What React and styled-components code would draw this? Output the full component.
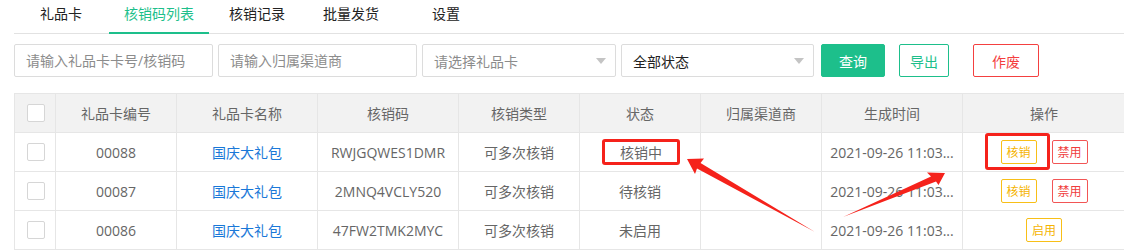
import React from "react";
import styled, { createGlobalStyle } from "styled-components";

const GlobalStyle = createGlobalStyle`
  html, body {
    margin: 0;
    padding: 0;
    overflow: hidden;
    background: #fff;
  }
  body {
    font-family: "Open Sans", "Noto Sans CJK SC", sans-serif;
    font-size: 14px;
    color: #333;
  }
  * {
    box-sizing: border-box;
  }
`;

const green = "#1dbf8b";
const red = "#f44040";
const yellow = "#f8bf17";

const Page = styled.div`
  position: relative;
  width: 1124px;
  height: 252px;
  overflow: hidden;
  padding-left: 14px;
`;

const TabBar = styled.div`
  display: flex;
  height: 34px;
  border-bottom: 1px solid #e2e2e2;
  padding-left: 11px;
`;

const Tab = styled.div`
  height: 34px;
  padding: 0 15px;
  margin-left: ${(p) => p.$offset || 0}px;
  line-height: 28px;
  color: ${(p) => (p.$active ? green : "#222")};
  border-bottom: 2px solid ${(p) => (p.$active ? green : "transparent")};
  margin-bottom: -1px;
  white-space: nowrap;
`;

const Filters = styled.div`
  display: flex;
  align-items: center;
  margin-top: 10px;
  height: 33px;
`;

const Field = styled.input`
  width: ${(p) => p.$w}px;
  height: 33px;
  margin-right: 5px;
  border: 1px solid #dcdcdc;
  border-radius: 2px;
  padding: 0 11px;
  font-family: inherit;
  font-size: 14px;
  color: #333;
  outline: none;
  &::placeholder {
    color: #8c8c8c;
  }
`;

const Select = styled.div`
  width: ${(p) => p.$w}px;
  height: 33px;
  margin-right: ${(p) => p.$mr}px;
  border: 1px solid #dcdcdc;
  border-radius: 2px;
  padding: 0 11px;
  display: flex;
  align-items: center;
  color: ${(p) => (p.$placeholder ? "#8c8c8c" : "#222")};
`;

const Caret = styled.span`
  margin-left: auto;
  margin-right: -2px;
  width: 0;
  height: 0;
  border-left: 5px solid transparent;
  border-right: 5px solid transparent;
  border-top: 6px solid #c4c4c4;
`;

const Button = styled.button`
  height: 33px;
  width: ${(p) => p.$w}px;
  margin-right: ${(p) => p.$mr || 0}px;
  border-radius: 2px;
  font-family: inherit;
  font-size: 14px;
  padding: 0;
  cursor: pointer;
  border: 1px solid ${(p) => p.$color};
  background: ${(p) => (p.$solid ? p.$color : "#fff")};
  color: ${(p) => (p.$solid ? "#fff" : p.$color)};
`;

const cols = "41px 121px 141px 141px 121px 121px 121px 141px 163px";

const Table = styled.div`
  margin-top: 16px;
  width: 1112px;
  border-left: 1px solid #e6e6e6;
  border-top: 1px solid #e6e6e6;
`;

const Row = styled.div`
  display: grid;
  grid-template-columns: ${cols};
  height: 39px;
  background: ${(p) => (p.$head ? "#f2f2f2" : "#fff")};
`;

const Cell = styled.div`
  position: relative;
  display: flex;
  align-items: center;
  justify-content: center;
  gap: 15px;
  border-right: 1px solid #e6e6e6;
  border-bottom: 1px solid #e6e6e6;
  color: ${(p) => p.$color || "#666"};
  white-space: nowrap;
`;

const Check = styled.span`
  width: 18px;
  height: 18px;
  margin-left: 1px;
  border: 1px solid #d6d6d6;
  border-radius: 2px;
  background: #fff;
`;

const Marked = styled.span`
  display: inline-flex;
  align-items: center;
  justify-content: center;
  width: 78px;
  height: 26px;
  margin-left: 2px;
  border: 3px solid #f5221b;
  border-radius: 3px;
`;

const Action = styled.span`
  position: relative;
  display: inline-flex;
  align-items: center;
  justify-content: center;
  width: 36px;
  height: 24px;
  border: 1px solid ${(p) => p.$color};
  border-radius: 2px;
  color: ${(p) => p.$text || p.$color};
  font-size: 12px;
`;

const Highlight = styled.span`
  position: absolute;
  left: -17px;
  top: -8px;
  width: 65px;
  height: 37px;
  border: 3px solid #f5221b;
  border-radius: 3px;
`;

const Arrows = styled.svg`
  position: absolute;
  left: 0;
  top: 0;
  pointer-events: none;
`;

const head = ["", "礼品卡编号", "礼品卡名称", "核销码", "核销类型", "状态", "归属渠道商", "生成时间", "操作"];

const rows = [
  { no: "00088", code: "RWJGQWES1DMR", status: "核销中", mark: true, actions: ["use", "ban"] },
  { no: "00087", code: "2MNQ4VCLY520", status: "待核销", actions: ["use", "ban"] },
  { no: "00086", code: "47FW2TMK2MYC", status: "未启用", actions: ["enable"] },
];

const tabs = [
  { label: "礼品卡" },
  { label: "核销码列表", active: true, offset: 12 },
  { label: "核销记录", offset: 5 },
  { label: "批量发货", offset: 8 },
  { label: "设置", offset: 23 },
];

const actionStyle = {
  use: { label: "核销", color: yellow, text: "#f5b400" },
  ban: { label: "禁用", color: "#f25555", text: "#f03c3c" },
  enable: { label: "启用", color: yellow, text: "#f5b400" },
};

export default function App() {
  return (
    <>
      <GlobalStyle />
      <Page>
        <TabBar>
          {tabs.map((t) => (
            <Tab key={t.label} $active={t.active} $offset={t.offset}>
              {t.label}
            </Tab>
          ))}
        </TabBar>

        <Filters>
          <Field $w={199} placeholder="请输入礼品卡卡号/核销码" />
          <Field $w={199} placeholder="请输入归属渠道商" />
          <Select $w={194} $mr={5} $placeholder>
            请选择礼品卡
            <Caret />
          </Select>
          <Select $w={193} $mr={7}>
            全部状态
            <Caret />
          </Select>
          <Button $w={64} $mr={14} $color={green} $solid>
            查询
          </Button>
          <Button $w={50} $mr={24} $color={green}>
            导出
          </Button>
          <Button $w={66} $color={red}>
            作废
          </Button>
        </Filters>

        <Table>
          <Row $head>
            {head.map((h, i) => (
              <Cell key={i}>{i === 0 ? <Check /> : h}</Cell>
            ))}
          </Row>
          {rows.map((r) => (
            <Row key={r.no}>
              <Cell>
                <Check />
              </Cell>
              <Cell>{r.no}</Cell>
              <Cell $color="#1a78d8">国庆大礼包</Cell>
              <Cell>{r.code}</Cell>
              <Cell>可多次核销</Cell>
              <Cell>{r.mark ? <Marked>{r.status}</Marked> : r.status}</Cell>
              <Cell />
              <Cell>2021-09-26 11:03...</Cell>
              <Cell>
                {r.actions.map((a) => {
                  const s = actionStyle[a];
                  return (
                    <Action key={a} $color={s.color} $text={s.text}>
                      {s.label}
                      {r.mark && a === "use" && <Highlight />}
                    </Action>
                  );
                })}
              </Cell>
            </Row>
          ))}
        </Table>

        <Arrows width="1124" height="252" viewBox="0 0 1124 252">
          <polygon
            points="687,159 704,158.5 700.5,163 815,232 697,168.5 695,174"
            fill="#f5221b"
          />
          <polygon
            points="945,173 927,172.5 931,176.5 843,217 936,181.5 938.5,185"
            fill="#f5221b"
          />
        </Arrows>
      </Page>
    </>
  );
}
